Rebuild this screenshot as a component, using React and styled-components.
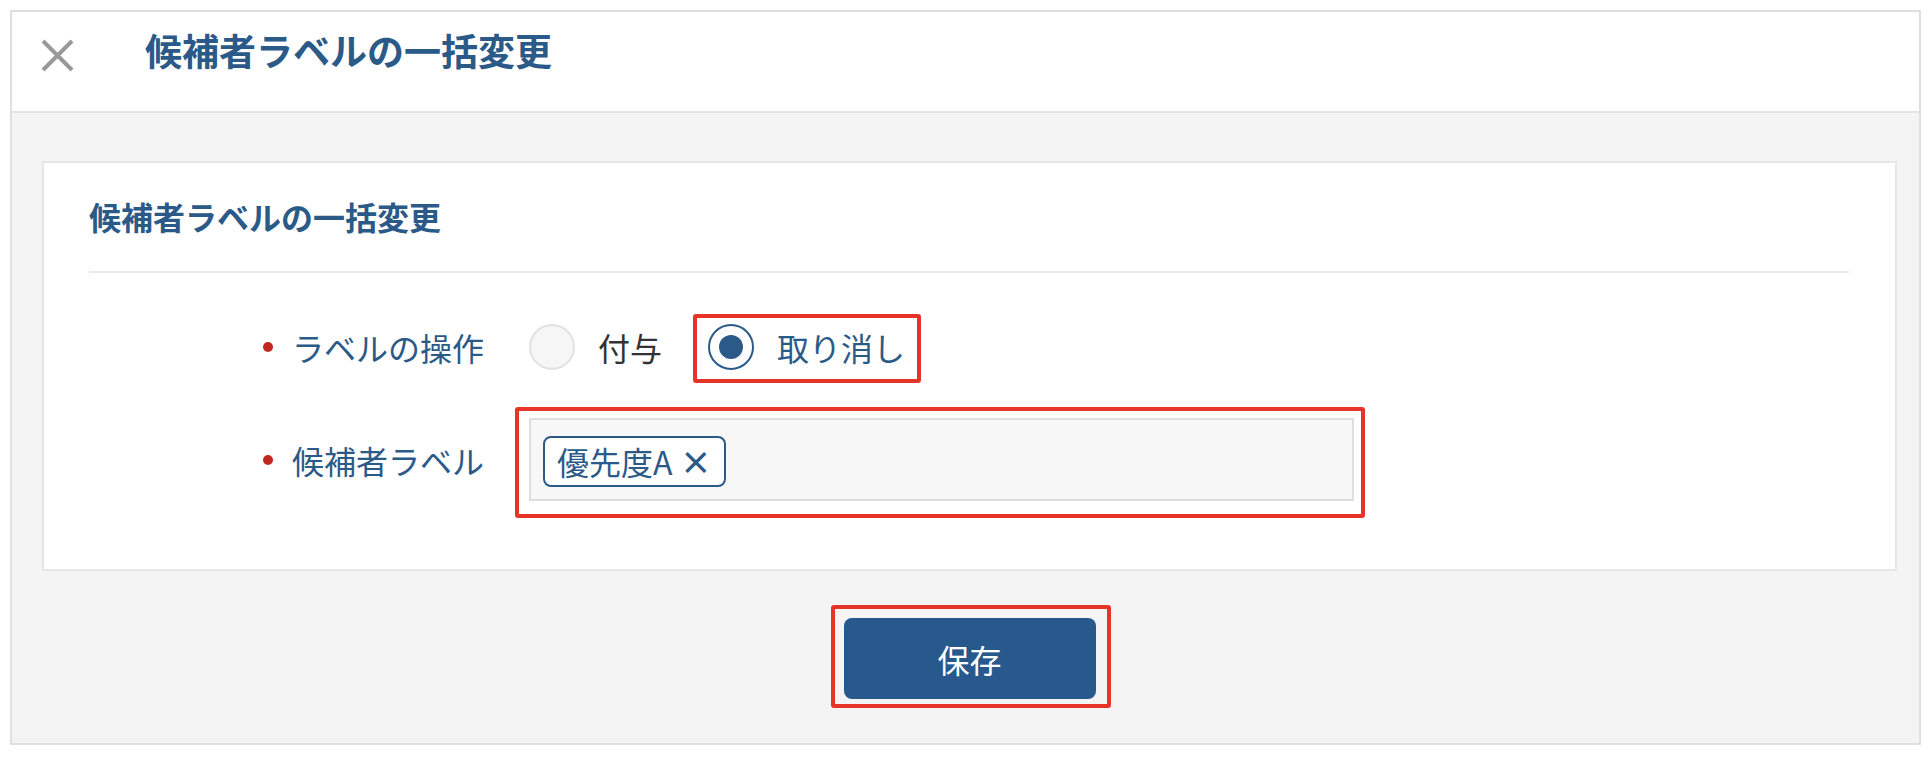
import React from "react";
import styled, { createGlobalStyle } from "styled-components";

const blue = "#2b5a88";

const GlobalStyle = createGlobalStyle`
  body {
    margin: 0;
    background: #ffffff;
    font-family: "Noto Sans CJK JP", "Noto Sans", sans-serif;
  }
`;

export default function App() {
  return (
    <>
      <GlobalStyle />
      <Page>
        <Frame>
          <Header>
            <CloseButton aria-label="閉じる">
              <svg width="33" height="33" viewBox="0 0 33 33">
                <path
                  d="M2 2 L31 31 M31 2 L2 31"
                  stroke="#999999"
                  strokeWidth="4"
                  fill="none"
                />
              </svg>
            </CloseButton>
            <HeaderTitle>候補者ラベルの一括変更</HeaderTitle>
          </Header>
          <Body>
            <Card>
              <CardTitle>候補者ラベルの一括変更</CardTitle>
              <Separator />
              <Form>
                <Row>
                  <Label>
                    <Bullet />
                    ラベルの操作
                  </Label>
                  <RadioGroup>
                    <Option>
                      <Radio />
                      <OptionText>付与</OptionText>
                    </Option>
                    <Marked>
                      <Option>
                        <Radio checked />
                        <OptionText checked>取り消し</OptionText>
                      </Option>
                      <Highlight $top={-10} $right={-16} $bottom={-13} $left={-15} />
                    </Marked>
                  </RadioGroup>
                </Row>
                <Row>
                  <Label>
                    <Bullet />
                    候補者ラベル
                  </Label>
                  <Marked>
                    <TagInput>
                      <Tag>
                        優先度A <TagRemove>×</TagRemove>
                      </Tag>
                    </TagInput>
                    <Highlight $top={-11} $right={-11} $bottom={-17} $left={-14} />
                  </Marked>
                </Row>
              </Form>
            </Card>
            <Footer>
              <Marked>
                <SaveButton>保存</SaveButton>
                <Highlight $top={-13} $right={-15} $bottom={-9} $left={-13} />
              </Marked>
            </Footer>
          </Body>
        </Frame>
      </Page>
    </>
  );
}

const Page = styled.div`
  padding: 10px 11px 10px 10px;
`;

const Frame = styled.div`
  border: 2px solid #dfdfdf;
  background: #f4f4f4;
`;

const Header = styled.div`
  display: flex;
  align-items: flex-start;
  height: 99px;
  padding-left: 29px;
  background: #ffffff;
  border-bottom: 2px solid #e4e4e4;
`;

const CloseButton = styled.div`
  width: 33px;
  height: 33px;
  margin-top: 27px;
  margin-right: 71px;
  cursor: pointer;
  svg {
    display: block;
  }
`;

const HeaderTitle = styled.h1`
  margin: 12px 0 0;
  font-size: 37px;
  line-height: 52px;
  font-weight: 700;
  color: ${blue};
`;

const Body = styled.div`
  padding: 48px 22px 44px 30px;
`;

const Card = styled.section`
  background: #ffffff;
  border: 2px solid #e6e6e6;
  padding: 0 46px 0 45px;
`;

const CardTitle = styled.h2`
  margin: 0;
  padding-top: 30px;
  font-size: 32px;
  line-height: 46px;
  font-weight: 700;
  color: ${blue};
`;

const Separator = styled.div`
  height: 2px;
  margin-top: 32px;
  background: #e8e8e8;
`;

const Form = styled.div`
  display: flex;
  flex-direction: column;
  gap: 48px;
  padding: 51px 0 68px 174px;
`;

const Row = styled.div`
  display: flex;
  align-items: center;
`;

const Label = styled.div`
  display: flex;
  align-items: center;
  width: 266px;
  flex-shrink: 0;
  font-size: 32px;
  line-height: 46px;
  color: ${blue};
`;

const Bullet = styled.span`
  width: 10px;
  height: 10px;
  border-radius: 50%;
  background: #c0281f;
  margin-right: 19px;
`;

const RadioGroup = styled.div`
  display: flex;
  align-items: center;
  gap: 46px;
`;

const Option = styled.label`
  display: flex;
  align-items: center;
  gap: 23px;
  cursor: pointer;
`;

const Radio = styled.span`
  position: relative;
  width: 46px;
  height: 46px;
  box-sizing: border-box;
  border-radius: 50%;
  border: 2px solid ${(p) => (p.checked ? blue : "#e2e2e2")};
  background: ${(p) => (p.checked ? "#ffffff" : "#f6f6f6")};
  &::after {
    content: "";
    display: ${(p) => (p.checked ? "block" : "none")};
    position: absolute;
    top: 9px;
    left: 9px;
    width: 24px;
    height: 24px;
    border-radius: 50%;
    background: ${blue};
  }
`;

const OptionText = styled.span`
  font-size: 32px;
  line-height: 46px;
  color: ${(p) => (p.checked ? blue : "#333333")};
`;

const Marked = styled.div`
  position: relative;
  display: flex;
`;

const Highlight = styled.span`
  position: absolute;
  top: ${(p) => p.$top}px;
  right: ${(p) => p.$right}px;
  bottom: ${(p) => p.$bottom}px;
  left: ${(p) => p.$left}px;
  border: 4px solid #e63428;
  border-radius: 3px;
  pointer-events: none;
`;

const TagInput = styled.div`
  display: flex;
  align-items: flex-start;
  box-sizing: border-box;
  width: 825px;
  height: 83px;
  padding: 16px 12px;
  background: #f7f7f7;
  border: 2px solid #dedede;
`;

const Tag = styled.span`
  display: inline-block;
  padding: 0 12px;
  font-size: 32px;
  line-height: 47px;
  color: ${blue};
  background: #ffffff;
  border: 2px solid ${blue};
  border-radius: 8px;
`;

const TagRemove = styled.span`
  font-weight: 700;
  cursor: pointer;
`;

const Footer = styled.div`
  display: flex;
  justify-content: center;
  margin-top: 47px;
`;

const SaveButton = styled.button`
  width: 252px;
  height: 81px;
  border: none;
  border-radius: 8px;
  background: #27598d;
  color: #ffffff;
  font-family: "Noto Sans CJK JP", "Noto Sans", sans-serif;
  font-size: 32px;
  cursor: pointer;
`;
